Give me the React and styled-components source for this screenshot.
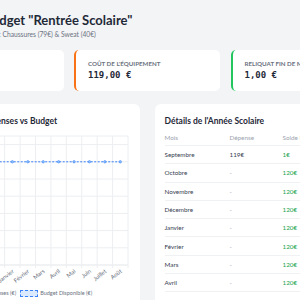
import styled, { createGlobalStyle } from "styled-components";

const GlobalStyle = createGlobalStyle`
  html, body {
    margin: 0;
    padding: 0;
    background: #f3f4f6;
    overflow: hidden;
  }
  body {
    font-family: Lato, "Noto Sans", sans-serif;
    color: #1f2937;
  }
`;

const Viewport = styled.div`
  display: flex;
  justify-content: center;
  padding: 12px 6px 0 0;
  width: 300px;
  box-sizing: border-box;
`;

const Page = styled.div`
  width: 459px;
  flex-shrink: 0;
  display: flex;
  flex-direction: column;
`;

const Header = styled.header`
  display: flex;
  align-items: center;
  gap: 18px;
`;

const HeaderIcon = styled.div`
  width: 48px;
  height: 26px;
  border-radius: 6px;
  background: #dbeafe;
`;

const Title = styled.h1`
  margin: 0;
  font-size: 13px;
  font-weight: 700;
  line-height: 17px;
  color: #1f2937;
`;

const Subtitle = styled.p`
  margin: 1px 0 0;
  font-size: 6.7px;
  line-height: 8px;
  color: #6b7280;
`;

const StatsRow = styled.div`
  display: grid;
  grid-template-columns: repeat(3, 1fr);
  gap: 10.5px;
  margin-top: 12px;
`;

const StatCard = styled.div`
  background: #fff;
  border-radius: 5px;
  border-left: 2px solid ${(p) => p.$accent};
  height: 41px;
  box-sizing: border-box;
  padding: 10px 12px;
  display: flex;
  flex-direction: column;
  gap: 3px;
`;

const StatLabel = styled.span`
  font-size: 6.2px;
  line-height: 7px;
  font-weight: 700;
  text-transform: uppercase;
  color: #6b7280;
  white-space: nowrap;
`;

const StatValue = styled.span`
  font-family: "DejaVu Sans Mono", "Liberation Mono", monospace;
  font-size: 9px;
  line-height: 11px;
  font-weight: 600;
  color: #1f2937;
`;

const PanelsRow = styled.div`
  display: grid;
  grid-template-columns: 1fr 1fr;
  gap: 15px;
  margin-top: 13px;
`;

const Panel = styled.section`
  background: #fff;
  border-radius: 6px;
  padding: 11px 10px;
  height: 260px;
`;

const PanelTitle = styled.h2`
  margin: 0;
  font-size: 8.5px;
  line-height: 12px;
  font-weight: 700;
  color: #1f2937;
`;

const Legend = styled.div`
  display: flex;
  justify-content: center;
  gap: 4px;
  margin-top: 2px;
`;

const LegendItem = styled.div`
  display: flex;
  align-items: center;
  gap: 2px;
  font-size: 5.5px;
  line-height: 7px;
  color: #6b7280;
`;

const LegendBox = styled.span`
  width: 16px;
  height: 5px;
  border: 1px ${(p) => (p.$dashed ? "dashed" : "solid")} ${(p) => p.$color};
  background: ${(p) => p.$fill};
`;

const Table = styled.table`
  width: 100%;
  border-collapse: collapse;
  margin-top: 2px;
  font-size: 6.3px;
`;

const Th = styled.th`
  text-align: left;
  font-weight: 400;
  color: #9ca3af;
  height: 16px;
  padding: 0;
  border-bottom: 1px solid #f0f1f3;
  white-space: nowrap;
  width: ${(p) => p.$w || "auto"};
`;

const Td = styled.td`
  padding: 0;
  height: 17.3px;
  border-bottom: 1px solid #f0f1f3;
  color: ${(p) => p.$color || "#374151"};
  white-space: nowrap;
`;

const months = [
  "Septembre", "Octobre", "Novembre", "Décembre", "Janvier", "Février",
  "Mars", "Avril", "Mai", "Juin", "Juillet", "Août",
];

const rows = months.map((m, i) => ({
  mois: m,
  depense: i === 0 ? "119€" : "-",
  solde: i === 0 ? "1€" : "120€",
}));

const plotLeft = 15;
const plotRight = 200;
const step = (plotRight - plotLeft) / 12;
const yOf = (v) => 135 - v * 0.86;

function Chart() {
  const ticks = [0, 20, 40, 60, 80, 100, 120, 140, 150];
  const pts = months.map((m, i) => [plotLeft + (i + 0.5) * step, yOf(120)]);
  return (
    <svg width="201" height="158" style={{ display: "block", marginTop: 3 }}>
      {ticks.map((t) => (
        <g key={t}>
          <line x1={plotLeft} x2={plotRight} y1={yOf(t)} y2={yOf(t)} stroke={t === 0 ? "#e3e5e8" : "#eceef1"} strokeWidth="1" />
          {t !== 150 && (
            <text x={plotLeft - 3} y={yOf(t) + 2} fontSize="5.5" fill="#9ca3af" textAnchor="end">{t}</text>
          )}
        </g>
      ))}
      {Array.from({ length: 13 }, (_, k) => (
        <line key={k} x1={plotLeft + k * step} x2={plotLeft + k * step} y1={yOf(150)} y2={yOf(0) + 3} stroke="#eceef1" strokeWidth="1" />
      ))}
      <rect x={plotLeft + step * 0.2} y={yOf(119)} width={step * 0.6} height={119 * 0.86} fill="rgba(239,68,68,0.5)" />
      <polyline
        points={pts.map((p) => p.join(",")).join(" ")}
        fill="none"
        stroke="#3b82f6"
        strokeWidth="1"
        strokeDasharray="2 1.5"
      />
      {pts.map(([x, y], i) => (
        <circle key={i} cx={x} cy={y} r="1.2" fill="#93c5fd" stroke="#3b82f6" strokeWidth="0.6" />
      ))}
      {months.map((m, i) => {
        const x = plotLeft + (i + 0.5) * step + 2;
        const y = yOf(0) + 7;
        return (
          <text key={m} x={x} y={y} fontSize="5.8" fill="#6b7280" textAnchor="end" transform={`rotate(-38 ${x} ${y})`}>
            {m}
          </text>
        );
      })}
    </svg>
  );
}

export default function App() {
  return (
    <>
      <GlobalStyle />
      <Viewport>
        <Page>
          <Header>
            <HeaderIcon />
            <div>
              <Title>Budget "Rentrée Scolaire"</Title>
              <Subtitle>Liste : Chaussures (79€) &amp; Sweat (40€)</Subtitle>
            </div>
          </Header>

          <StatsRow>
            <StatCard $accent="#3b82f6">
              <StatLabel>Budget mensuel</StatLabel>
              <StatValue>120,00 €</StatValue>
            </StatCard>
            <StatCard $accent="#f97316">
              <StatLabel>Coût de l'équipement</StatLabel>
              <StatValue>119,00 €</StatValue>
            </StatCard>
            <StatCard $accent="#22c55e">
              <StatLabel>Reliquat fin de mois</StatLabel>
              <StatValue>1,00 €</StatValue>
            </StatCard>
          </StatsRow>

          <PanelsRow>
            <Panel>
              <PanelTitle>Évolution des Dépenses vs Budget</PanelTitle>
              <Chart />
              <Legend>
                <LegendItem>
                  <LegendBox $color="#ef4444" $fill="rgba(239,68,68,0.5)" />
                  Dépenses (€)
                </LegendItem>
                <LegendItem>
                  <LegendBox $dashed $color="#3b82f6" $fill="#dbeafe" />
                  Budget Disponible (€)
                </LegendItem>
              </Legend>
            </Panel>
            <Panel>
              <PanelTitle>Détails de l'Année Scolaire</PanelTitle>
              <Table>
                <thead>
                  <tr>
                    <Th $w="65px">Mois</Th>
                    <Th $w="53px">Dépense</Th>
                    <Th>Solde Fin de mois</Th>
                  </tr>
                </thead>
                <tbody>
                  {rows.map((r) => (
                    <tr key={r.mois}>
                      <Td>{r.mois}</Td>
                      <Td $color={r.depense === "-" ? "#9ca3af" : "#374151"}>{r.depense}</Td>
                      <Td $color="#16a34a">{r.solde}</Td>
                    </tr>
                  ))}
                </tbody>
              </Table>
            </Panel>
          </PanelsRow>
        </Page>
      </Viewport>
    </>
  );
}
